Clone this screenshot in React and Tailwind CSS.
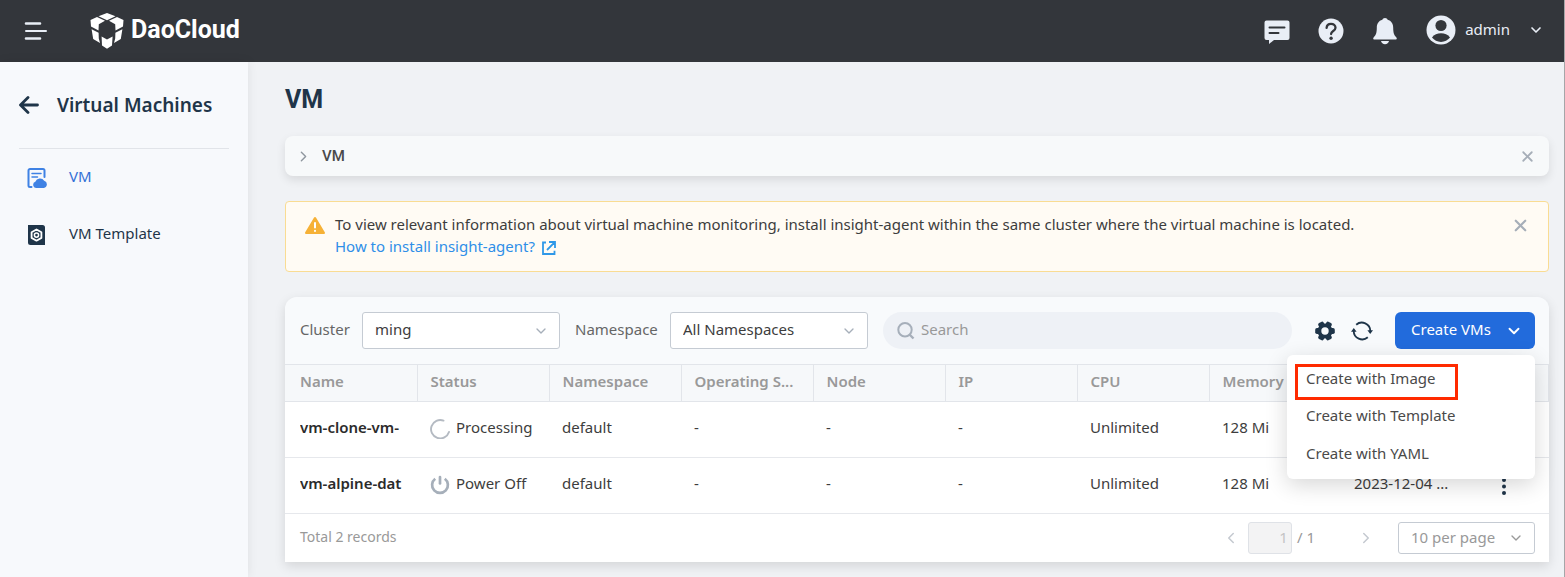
import React from "react";
import { ChevronDown, ChevronLeft, ChevronRight, X } from "lucide-react";

function Logo() {
  return (
    <svg viewBox="0 0 34 36" className="h-9 w-[34px]" fill="#fff" aria-hidden="true">
      <path d="M17 0 25.5 3.2 17 7.2 8.5 3.2Z" />
      <path d="M7 4 15 7.8 8.8 11.3 8.5 17.5 1 13.6 0.5 7Z" />
      <path d="M27 4 33.5 7 33 13.6 25.5 17.5 25.2 11.3 19 7.8Z" />
      <path d="M1.6 16.2 8.6 19.8 8.8 25.6 10 30 3.2 26Z" />
      <path d="M32.4 16.2 25.4 19.8 25.2 25.6 24 30 30.8 26Z" />
      <path d="M11.6 23.4 17 26.6 22.6 23.4 22 32.6 17 35.8 12 32.6Z" />
    </svg>
  );
}

function MessageIcon() {
  return (
    <svg viewBox="0 0 26 24" className="h-6 w-[26px]" aria-hidden="true">
      <path fill="#e9eef6" d="M2.5 0.5h21A2 2 0 0 1 25.500 2.500v15.500a2 2 0 0 1-2 2H10L5 24v-4H2.500a2 2 0 0 1-2-2V2.500a2 2 0 0 1 2-2Z" />
      <path stroke="#33363b" strokeWidth="2" strokeLinecap="round" d="M5.500 7.500h15M5.500 13h9" />
    </svg>
  );
}

function HelpIcon() {
  return (
    <svg viewBox="0 0 26 26" className="size-[26px]" fill="none" aria-hidden="true">
      <circle cx="13" cy="13" r="12.500" fill="#e9eef6" />
      <path stroke="#33363b" strokeWidth="2.300" strokeLinecap="round" d="M8.600 9.800c.2-2.600 2-4 4.400-4 2.500 0 4.500 1.500 4.500 3.900 0 3.200-4.400 3.400-4.400 6.300" />
      <circle cx="13.100" cy="20.300" r="1.700" fill="#33363b" />
    </svg>
  );
}

function BellIcon() {
  return (
    <svg viewBox="0 0 24 27" className="h-[27px] w-6" fill="#e9eef6" aria-hidden="true">
      <path d="M12 0c1.400 0 2.300.8 2.600 1.800 3.800 1 5.600 4 5.600 8 0 5 .9 7.500 3.200 9.700.8.900.3 2-.9 2h-21c-1.200 0-1.700-1.100-.9-2 2.300-2.200 3.200-4.700 3.200-9.700 0-4 1.800-7 5.600-8C9.700.8 10.600 0 12 0Z" />
      <path d="M8 23h8c-.4 2-1.900 3.200-4 3.200S8.400 25 8 23Z" />
    </svg>
  );
}

function UserIcon() {
  return (
    <svg viewBox="0 0 30 30" className="size-[30px]" aria-hidden="true">
      <circle cx="15" cy="15" r="14.500" fill="#e9eef6" />
      <circle cx="15" cy="10.500" r="5.600" fill="#33363b" />
      <path fill="#33363b" d="M6 22.500c2-2.800 5.500-4.200 9-4.200s7 1.400 9 4.200c-2.200 2.800-5.400 4.400-9 4.400s-6.800-1.600-9-4.400Z" />
    </svg>
  );
}

function VmIcon() {
  return (
    <svg viewBox="0 0 20 20" className="size-5" fill="none" aria-hidden="true">
      <path stroke="#3f82e4" strokeWidth="2" strokeLinecap="round" strokeLinejoin="round" d="M4.500 19H3a1.500 1.500 0 0 1-1.500-1.500v-15A1.500 1.500 0 0 1 3 1h13a1.500 1.500 0 0 1 1.500 1.500V9" />
      <path stroke="#3f82e4" strokeWidth="1.500" strokeLinecap="round" d="M5 5.500h9M5 9h5.500" />
      <path fill="#3f82e4" d="M9 20a3.200 3.200 0 0 1-.7-6.200 5 5 0 0 1 8.900-1 3.700 3.700 0 0 1-.4 7.200Z" />
    </svg>
  );
}

function TemplateIcon() {
  return (
    <svg viewBox="0 0 20 20" className="size-5" fill="none" aria-hidden="true">
      <path fill="#1f3549" d="M1 0h14.500A2.500 2.500 0 0 1 18 2.500V20H3.500A2.500 2.500 0 0 1 1 17.500Z" />
      <path stroke="#fff" strokeWidth="1.800" strokeLinejoin="round" d="m9.500 4.500 4.900 2.800v5.600l-4.900 2.800-4.900-2.800V7.300Z" />
      <circle cx="9.500" cy="10.100" r="2.100" stroke="#fff" strokeWidth="1.500" />
    </svg>
  );
}

function WarningIcon() {
  return (
    <svg viewBox="0 0 20 17" className="h-[17px] w-5" aria-hidden="true">
      <path fill="#f6b136" d="M8.900.7a1.300 1.300 0 0 1 2.200 0l8.700 14.500a1.200 1.200 0 0 1-1.100 1.800H1.300a1.200 1.200 0 0 1-1.100-1.800Z" />
      <path stroke="#fff" strokeWidth="2" strokeLinecap="round" d="M10 6v4.500M10 13.800v.1" />
    </svg>
  );
}

function ExternalIcon() {
  return (
    <svg viewBox="0 0 14 14" className="mt-[3px] size-[14px]" fill="none" stroke="#2f98e8" strokeWidth="1.800" aria-hidden="true">
      <path d="M4 1.500H1V13h11.500V9.800M7 1h6v6M12.800 1.200 5 9" />
    </svg>
  );
}

function GearIcon() {
  return (
    <svg viewBox="0 0 20 20" className="size-5" aria-hidden="true">
      <g fill="#1f3549">
        <circle cx="10" cy="10" r="7.600" />
        <rect x="0.200" y="7" width="19.600" height="6" rx="1.800" />
        <rect x="0.200" y="7" width="19.600" height="6" rx="1.800" transform="rotate(60 10 10)" />
        <rect x="0.200" y="7" width="19.600" height="6" rx="1.800" transform="rotate(120 10 10)" />
      </g>
      <circle cx="10" cy="10" r="3.700" fill="#f8fafc" />
    </svg>
  );
}

function RefreshIcon() {
  return (
    <svg viewBox="0 0 22 20" className="h-5 w-[22px]" fill="none" aria-hidden="true">
      <path stroke="#1f3549" strokeWidth="1.800" d="M5.200 3.700a8.500 8.500 0 0 1 14.100 6.300M16.800 16.300A8.500 8.500 0 0 1 2.700 10" />
      <path fill="#1f3549" d="M16.400 9.300H22l-2.800 3.700ZM0 10.700h5.600L2.800 7Z" />
    </svg>
  );
}

function SearchIcon() {
  return (
    <svg viewBox="0 0 18 18" className="size-[18px] shrink-0" fill="none" stroke="#a6afba" strokeWidth="2" aria-hidden="true">
      <circle cx="8" cy="7.800" r="6.700" />
      <path strokeWidth="2.400" d="m12.500 12.500 4 4" />
    </svg>
  );
}

function SpinnerIcon() {
  return (
    <svg viewBox="0 0 20 20" className="size-5 shrink-0" fill="none" stroke="#b4bac2" strokeWidth="1.900" strokeLinecap="round" aria-hidden="true">
      <path d="M13.500 1.600A9.200 9.200 0 1 0 19 13" />
    </svg>
  );
}

function PowerIcon() {
  return (
    <svg viewBox="0 0 20 20" className="size-5 shrink-0" fill="none" stroke="#a6afba" strokeWidth="2.700" aria-hidden="true">
      <path d="M5.200 3.700a7.900 7.900 0 1 0 9.600 0" />
      <path strokeLinecap="round" d="M10 2v6.500" />
    </svg>
  );
}

function SelectBox({ id, label, value, className, chevron }) {
  return (
    <span className={"relative inline-flex items-center " + className}>
      <select id={id} aria-label={label} className="h-full w-full appearance-none rounded-[3px] border border-[#c5cbd3] bg-white pb-[3px] pl-3 pr-8 outline-none">
        <option>{value}</option>
      </select>
      <ChevronDown size={16} className={"pointer-events-none absolute right-[11px] " + chevron} strokeWidth={2} />
    </span>
  );
}

const columns = ["Name", "Status", "Namespace", "Operating S...", "Node", "IP", "CPU", "Memory", ""];

const rows = [
  { name: "vm-clone-vm-", status: "Processing", icon: <SpinnerIcon />, created: "", menu: false },
  { name: "vm-alpine-dat", status: "Power Off", icon: <PowerIcon />, created: "2023-12-04 ...", menu: true },
];

function Header() {
  return (
    <header className="flex h-[62px] items-center bg-[#33363b] pl-6 pr-5 text-[#e9eef6]">
      <button aria-label="Toggle menu" className="mr-[42px]">
        <svg viewBox="0 0 24 20" className="h-5 w-6" stroke="#e9eef6" strokeWidth="2.600" strokeLinecap="round" aria-hidden="true">
          <path d="M2 2.500h14M2 17.500h14" />
          <path strokeWidth="2" d="M2 10h20" />
        </svg>
      </button>
      <a href="#" className="flex items-center gap-[7px] text-white">
        <Logo />
        <span className="pb-[2px] font-[Roboto,sans-serif] text-[25px] font-bold leading-7">DaoCloud</span>
      </a>
      <div className="ml-auto flex items-center">
        <button aria-label="Messages" className="mr-7 pt-[2px]"><MessageIcon /></button>
        <button aria-label="Help" className="mr-[29px]"><HelpIcon /></button>
        <button aria-label="Notifications" className="mr-[29px]"><BellIcon /></button>
        <button className="flex items-center pb-[2px]">
          <UserIcon />
          <span className="ml-[9px] mr-[18px] pb-[2px]">admin</span>
          <ChevronDown size={16} strokeWidth={2.5} />
        </button>
      </div>
    </header>
  );
}

function Sidebar() {
  return (
    <aside className="w-[248px] shrink-0 bg-[#f7f9fc] px-[19px] shadow-[0_0_10px_rgba(0,0,0,0.08)]">
      <div className="flex h-[87px] items-center border-b border-[#e1e4e9] text-[#1f3549]">
        <button aria-label="Back">
          <svg viewBox="0 0 20 18" className="h-[18px] w-5" fill="none" stroke="#1f3549" strokeWidth="2.800" strokeLinecap="round" strokeLinejoin="round" aria-hidden="true">
            <path d="M9 1.500 1.500 9 9 16.500M2 9h16.500" />
          </svg>
        </button>
        <h2 className="ml-[18px] text-[19px] font-semibold">Virtual Machines</h2>
      </div>
      <nav className="text-[#1f3549]">
        <a href="#vm" className="flex h-[57px] items-center gap-[22px] pl-2 text-[#3370d6]">
          <VmIcon />
          <span className="pb-1">VM</span>
        </a>
        <a href="#template" className="flex h-[57px] items-center gap-[22px] pl-2">
          <TemplateIcon />
          <span className="pb-1">VM Template</span>
        </a>
      </nav>
    </aside>
  );
}

function CreateMenu() {
  return (
    <div className="relative ml-[22px]">
      <button className="flex h-[37px] w-[140px] items-center justify-between rounded-md bg-[#226bdc] pl-4 pr-3 text-white">
        <span className="pb-[3px]">Create VMs</span>
        <ChevronDown size={18} strokeWidth={2.5} />
      </button>
      <div className="absolute right-0 top-[43px] z-10 w-[248px] rounded-md bg-white py-[6px] text-[#4a4a4a] shadow-[0_6px_22px_rgba(0,0,0,0.16)]">
        <button className="flex h-[37px] w-full items-center pb-1 pl-[19px]">Create with Image</button>
        <button className="flex h-[38px] w-full items-center pb-1 pl-[19px]">Create with Template</button>
        <button className="flex h-[37px] w-full items-center pb-1 pl-[19px]">Create with YAML</button>
        <span className="pointer-events-none absolute left-2 top-[9px] h-9 w-[163px] border-[3px] border-[#ff2a00]" />
      </div>
    </div>
  );
}

function Toolbar() {
  return (
    <div className="flex h-[67px] items-center rounded-t-xl bg-[#f8fafc] pl-[15px] pr-[14px]">
      <label htmlFor="cluster" className="w-[62px] pb-[3px] text-[#666]">Cluster</label>
      <SelectBox id="cluster" value="ming" className="h-[37px] w-[198px]" chevron="text-[#a6afba]" />
      <label htmlFor="namespace" className="ml-[15px] w-[95px] pb-[3px] text-[#666]">Namespace</label>
      <SelectBox id="namespace" value="All Namespaces" className="h-[37px] w-[198px]" chevron="text-[#a6afba]" />
      <label className="ml-[15px] mr-[23px] flex h-[37px] flex-1 items-center gap-[6px] rounded-full bg-[#eef1f6] pl-[14px] pr-4">
        <SearchIcon />
        <input type="search" aria-label="Search" placeholder="Search" className="w-full bg-transparent pb-[3px] outline-none placeholder:text-[#999]" />
      </label>
      <button aria-label="Settings"><GearIcon /></button>
      <button aria-label="Refresh" className="ml-4"><RefreshIcon /></button>
      <CreateMenu />
    </div>
  );
}

function VmTable() {
  return (
    <table className="w-full table-fixed border-collapse text-left">
      <colgroup>
        {columns.map((c) => <col key={c} className="w-[132px]" />)}
        <col />
      </colgroup>
      <thead>
        <tr className="h-[37px] border-y border-[#e2e5ea] bg-[#f6f8fa] text-[#999]">
          {columns.map((c) => (
            <th key={c} aria-label={c || "Created"} className="whitespace-nowrap border-r border-[#e2e5ea] pb-[5px] pl-[13px] font-semibold first:pl-[15px]">{c}</th>
          ))}
          <th aria-label="Actions" className="border-r border-[#e2e5ea]" />
        </tr>
      </thead>
      <tbody>
        {rows.map((r) => (
          <tr key={r.name} className="h-14 border-b border-[#e6e8ec] bg-white">
            <td className="pb-[6px] pl-[15px] pr-2 font-semibold text-[#2b2b2b]">
              <div className="overflow-hidden whitespace-nowrap">{r.name}</div>
            </td>
            <td className="whitespace-nowrap pb-[2px] pl-[13px]">
              <div className="flex items-center gap-[6px]">{r.icon}<span className="pb-[3px]">{r.status}</span></div>
            </td>
            <td className="pb-[6px] pl-[13px]">default</td>
            <td className="pb-[6px] pl-[13px]">-</td>
            <td className="pb-[6px] pl-[13px]">-</td>
            <td className="pb-[6px] pl-[13px]">-</td>
            <td className="pb-[6px] pl-[13px]">Unlimited</td>
            <td className="pb-[6px] pl-[13px]">128 Mi</td>
            <td className="whitespace-nowrap pb-[6px] pl-[13px]">{r.created}</td>
            <td className="pl-6">
              {r.menu && (
                <button aria-label="More actions" className="flex w-[14px] justify-center">
                  <svg viewBox="0 0 4 18" className="h-[18px] w-1" fill="#1f3549" aria-hidden="true">
                    <circle cx="2" cy="3" r="2" /><circle cx="2" cy="9.500" r="2" /><circle cx="2" cy="16" r="2" />
                  </svg>
                </button>
              )}
            </td>
          </tr>
        ))}
      </tbody>
    </table>
  );
}

function Pagination() {
  return (
    <div className="flex h-12 items-center bg-white pl-[15px] pr-[14px] text-[#999]">
      <span className="pb-[2px] text-[14px]">Total 2 records</span>
      <button aria-label="Previous page" className="ml-auto text-[#c4c9d0]"><ChevronLeft size={18} /></button>
      <input aria-label="Page" disabled defaultValue="1" className="ml-2 h-8 w-11 rounded-[3px] border border-[#dfe2e7] bg-[#f3f3f4] pb-[2px] pr-[3px] text-right text-[#c4c4c4]" />
      <span className="ml-[5px] pb-[2px]">/ 1</span>
      <button aria-label="Next page" className="ml-[42px] text-[#c4c9d0]"><ChevronRight size={18} /></button>
      <SelectBox id="page-size" label="Rows per page" value="10 per page" className="ml-[23px] h-8 w-[137px]" chevron="text-[#999]" />
    </div>
  );
}

export default function App() {
  return (
    <div className="flex min-h-screen flex-col border-r border-[#a5a6a8] bg-[#f0f2f5] font-['Noto_Sans',sans-serif] text-[15px] leading-[22px] text-[#3d3d3d]">
      <Header />
      <div className="flex flex-1">
        <Sidebar />
        <main className="min-w-0 flex-1 pl-[37px] pr-[15px] pt-[23px]">
          <h1 className="font-[Roboto,sans-serif] text-[25px] font-bold leading-[30px] text-[#1f3549]">VM</h1>
          <section className="mt-[21px] flex h-10 items-center rounded-lg bg-[#f7f9fa] pl-[10px] pr-[13px] shadow-[0_4px_10px_rgba(0,0,0,0.1)]">
            <button className="flex items-center gap-[10px] font-[Roboto,sans-serif] font-medium text-[#4a4a4a]">
              <ChevronRight size={17} className="text-[#8f979f]" />
              VM
            </button>
            <button aria-label="Close" className="ml-auto text-[#a6aeb8]"><X size={17} strokeWidth={2.5} /></button>
          </section>
          <section className="mt-[25px] flex h-[71px] items-start rounded border border-[#f9dc93] bg-[#fffbf4] pl-[19px] pr-[18px] pt-[11px]">
            <span className="mt-[4px]"><WarningIcon /></span>
            <div className="ml-[10px]">
              <p>To view relevant information about virtual machine monitoring, install insight-agent within the same cluster where the virtual machine is located.</p>
              <a href="#insight" className="flex items-center gap-[7px] text-[#2f8fe8]">
                How to install insight-agent?
                <ExternalIcon />
              </a>
            </div>
            <button aria-label="Dismiss" className="ml-auto mt-[3px] text-[#a6aeb8]"><X size={19} strokeWidth={2.7} /></button>
          </section>
          <section className="mt-[25px] rounded-t-xl shadow-[0_4px_12px_rgba(0,0,0,0.12)]">
            <Toolbar />
            <VmTable />
            <Pagination />
          </section>
        </main>
      </div>
    </div>
  );
}
